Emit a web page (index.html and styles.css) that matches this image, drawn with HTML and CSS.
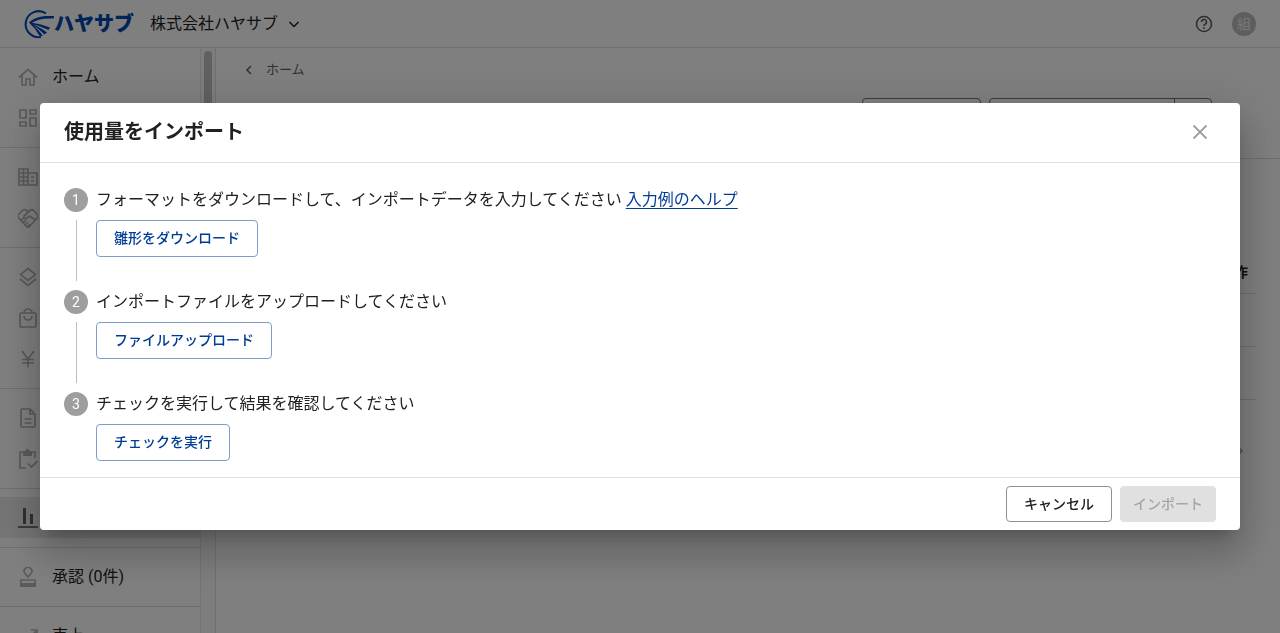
FILE: index.html
```html
<!doctype html>
<html lang="ja">
<head>
    <meta charset="UTF-8">
    <title>使用量をインポート</title>
    <link rel="stylesheet" href="styles.css">
</head>
<body>
<header class="header">
    <a href="#" class="logo">
        <svg class="logo-mark" viewBox="0 0 30 28">
            <path class="ring" d="M22 3.500A13 13 0 1 0 17 27"/>
            <path d="M5 12.500C11 6.500 19 5.500 30.500 6L29.500 8.500C20 8 13 9.500 8 12.800Q17 14 26 17.500L24.500 20Q16 15.800 9 14.300Q18 18.500 23 22.500L20.500 24.500Q15.500 19 9 15.200Q15.500 20.500 18.800 25.500L16 26.500Q12 19 5 12.500Z"/>
        </svg>
        <span>ハヤサブ</span>
    </a>
    <button type="button" class="company">株式会社ハヤサブ
        <svg class="icon-16" viewBox="0 0 16 16"><path d="M3.500 6L8 10.500L12.500 6"/></svg>
    </button>
    <a href="#" class="help" aria-label="ヘルプ">
        <svg class="icon-20" viewBox="0 0 20 20"><circle cx="10" cy="10" r="7.500"/><path d="M7.500 8a2.500 2.500 0 1 1 3.600 2.200c-.8.500-1.100.9-1.100 1.800M10 13.200v1.700"/></svg>
    </a>
    <span class="avatar">組</span>
</header>

<div class="page">
    <nav class="sidebar">
        <div class="menu">
            <div class="menu-group">
                <a href="#" class="menu-item">
                    <svg class="icon-20" viewBox="0 0 20 20"><path d="M1 10.500L10 2.500L19 10.500M4 8.500V18H8V12H12V18H16V8.500"/></svg>
                    ホーム
                </a>
                <a href="#" class="menu-item" aria-label="ダッシュボード">
                    <svg class="icon-20" viewBox="0 0 20 20"><path d="M2 2h6v8H2zM12 2h6v4h-6zM2 14h6v4H2zM12 10h6v8h-6z"/></svg>
                </a>
            </div>
            <div class="menu-group">
                <a href="#" class="menu-item" aria-label="会社">
                    <svg class="icon-20" viewBox="0 0 20 20"><path d="M1 2h9v16H1zM10 6h9v12h-9M1 6h9M1 10h9M1 14h9M5.500 2v16M13 10h3M13 14h3"/></svg>
                </a>
                <a href="#" class="menu-item" aria-label="取引先">
                    <svg class="icon-20" viewBox="0 0 20 20"><path d="M10 3.500L8 2Q6 1 4.500 2.500L1 6Q-1 8 .8 10L8.500 18.500Q10 19.800 11.500 18.500L19.200 10Q21 8 19 6L15.500 2.500Q14 1 12 2.500L6 8Q5.500 11 8.500 10.500L11.500 8L17.500 12M3 12.500L5.500 10M5 14.800L7.800 12M7 17L10 14M9.500 18.800L12 16"/></svg>
                </a>
            </div>
            <div class="menu-group">
                <a href="#" class="menu-item" aria-label="商品">
                    <svg class="icon-20" viewBox="0 0 20 20"><path d="M10 1.500L17.500 7.500L10 13.500L2.500 7.500ZM2 12L10 18.500L18 12"/></svg>
                </a>
                <a href="#" class="menu-item" aria-label="注文">
                    <svg class="icon-20" viewBox="0 0 20 20"><rect x="2" y="5" width="16" height="14" rx="1"/><path d="M6 5a4 4 0 0 1 8 0M6 8a4 4 0 0 0 8 0"/></svg>
                </a>
                <a href="#" class="menu-item" aria-label="請求">
                    <svg class="icon-20" viewBox="0 0 20 20"><path d="M4 2L10 10L16 2M4 10.500h12M4 14h12M10 10v8.500"/></svg>
                </a>
            </div>
            <div class="menu-group">
                <a href="#" class="menu-item" aria-label="書類">
                    <svg class="icon-20" viewBox="0 0 20 20"><path d="M4 1h8l5 5v12q0 1-1 1H4q-1 0-1-1V2q0-1 1-1zM12 1v5h5M6.500 11h7M6.500 15h7"/></svg>
                </a>
                <a href="#" class="menu-item" aria-label="確認">
                    <svg class="icon-20" viewBox="0 0 20 20"><path d="M8 19H2V3h15v6M10 14.500l3.500 3.500l6-6"/><path class="filled" d="M5 2h2.500a2 2 0 0 1 4 0H14v5H5z"/></svg>
                </a>
            </div>
            <div class="menu-group">
                <a href="#" class="menu-item selected" aria-label="使用量">
                    <svg class="icon-20" viewBox="0 0 20 20"><path class="bars" d="M6.500 0v16M13.500 6v10"/><path d="M0 19h20"/></svg>
                </a>
            </div>
            <div class="menu-group">
                <a href="#" class="menu-item">
                    <svg class="icon-20" viewBox="0 0 20 20"><path d="M10 10L7 6.500a3.800 3.800 0 1 1 6 0ZM3 13h14v5H3z"/><path class="filled" d="M2 16h16v4H2z"/></svg>
                    承認 (0件)
                </a>
            </div>
            <div class="menu-group">
                <a href="#" class="menu-item">
                    <svg class="icon-20" viewBox="0 0 20 20"><path d="M1 15L7 9L11 13L18 5M13 4h6v6"/></svg>
                    売上
                </a>
            </div>
        </div>
        <div class="scrollbar"><div class="thumb"></div></div>
    </nav>

    <main class="main">
        <div class="main-head">
            <a href="#" class="breadcrumb">
                <svg class="icon-16" viewBox="0 0 16 16"><path d="M10 4L6 8L10 12"/></svg>
                ホーム
            </a>
            <div class="toolbar">
                <button type="button" class="tool" aria-label="出力"></button>
                <div class="split">
                    <button type="button" class="split-main" aria-label="登録"></button>
                    <button type="button" class="split-more" aria-label="その他"></button>
                </div>
            </div>
        </div>
        <div class="list">
            <table class="list-table">
                <thead><tr><th>操作</th></tr></thead>
                <tbody>
                <tr><td></td></tr>
                <tr><td></td></tr>
                </tbody>
            </table>
            <button type="button" class="next" aria-label="次へ">
                <svg class="icon-16" viewBox="0 0 16 16"><path d="M6 4L10 8L6 12"/></svg>
            </button>
        </div>
    </main>
</div>

<div class="backdrop">
    <div class="dialog" role="dialog" aria-labelledby="dialog-title">
        <div class="dialog-head">
            <h2 id="dialog-title">使用量をインポート</h2>
            <button type="button" class="close" aria-label="閉じる">
                <svg class="icon-16" viewBox="0 0 16 16"><path d="M1.500 1.500L14.500 14.500M14.500 1.500L1.500 14.500"/></svg>
            </button>
        </div>
        <ol class="steps">
            <li class="step">
                <span class="number">1</span>
                <div class="step-body">
                    <p>フォーマットをダウンロードして、インポートデータを入力してください <a href="#">入力例のヘルプ</a></p>
                    <button type="button" class="btn">雛形をダウンロード</button>
                </div>
            </li>
            <li class="step">
                <span class="number">2</span>
                <div class="step-body">
                    <p>インポートファイルをアップロードしてください</p>
                    <button type="button" class="btn">ファイルアップロード</button>
                </div>
            </li>
            <li class="step">
                <span class="number">3</span>
                <div class="step-body">
                    <p>チェックを実行して結果を確認してください</p>
                    <button type="button" class="btn">チェックを実行</button>
                </div>
            </li>
        </ol>
        <div class="dialog-foot">
            <button type="button" class="btn btn-cancel">キャンセル</button>
            <button type="button" class="btn btn-import" disabled>インポート</button>
        </div>
    </div>
</div>
</body>
</html>
```

FILE: styles.css
```css
* {
    margin: 0;
    padding: 0;
    box-sizing: border-box;
}

body {
    height: 100vh;
    display: flex;
    flex-direction: column;
    overflow: hidden;
    background-color: #fff;
    color: #212121;
    font-family: Roboto, "Noto Sans CJK JP", sans-serif;
    font-size: 16px;
    line-height: 24px;
}

a {
    color: inherit;
    text-decoration: none;
}

button {
    font: inherit;
    color: inherit;
    background: none;
    border: 0;
    cursor: pointer;
}

svg {
    flex-shrink: 0;
    fill: none;
    stroke: currentColor;
    stroke-width: 2;
}

.icon-16 {
    width: 16px;
    height: 16px;
    stroke-width: 1.5;
}

.icon-20 {
    width: 20px;
    height: 20px;
}

.filled {
    fill: currentColor;
    stroke: none;
}

/* ヘッダー */
.header {
    height: 48px;
    flex-shrink: 0;
    display: flex;
    align-items: center;
    padding: 0 24px;
    border-bottom: 1px solid #e0e0e0;
}

.logo {
    display: flex;
    align-items: center;
    color: #0046b0;
    font-size: 20px;
    font-weight: 900;
}

.logo-mark {
    width: 30px;
    height: 28px;
    fill: currentColor;
    stroke: none;
}

.ring {
    fill: none;
    stroke: currentColor;
    stroke-width: 2;
}

.company {
    display: flex;
    align-items: center;
    gap: 8px;
    margin-left: 16px;
}

.help {
    display: flex;
    margin-left: auto;
    color: #616161;
}

.help svg {
    stroke-width: 1.6;
}

.avatar {
    width: 24px;
    height: 24px;
    margin-left: 18px;
    border-radius: 50%;
    background-color: #bdbdbd;
    color: #eee;
    font-size: 14px;
    text-align: center;
}

.page {
    flex: 1;
    min-height: 0;
    display: flex;
}

/* サイドメニュー */
.sidebar {
    width: 216px;
    flex-shrink: 0;
    display: flex;
    border-right: 1px solid #e0e0e0;
}

.menu {
    flex: 1;
    overflow: hidden;
    border-right: 1px solid #e8e8e8;
}

.menu-group {
    padding: 8px 0 9px;
    border-bottom: 1px solid #dcdcdc;
}

.menu-item {
    height: 41px;
    display: flex;
    align-items: center;
    gap: 14px;
    padding: 0 18px;
}

.menu-item svg {
    color: #b4b4b4;
    stroke-width: 1.7;
}

.selected {
    background-color: #ebebeb;
}

.selected svg {
    color: #616161;
}

.bars {
    stroke-width: 3;
}

.scrollbar {
    width: 14px;
    padding: 3px;
    background-color: #fafafa;
}

.thumb {
    height: 240px;
    border-radius: 4px;
    background-color: #c1c1c1;
}

/* 一覧 */
.main {
    flex: 1;
    min-width: 0;
}

.main-head {
    height: 111px;
    padding: 10px 68px 0 25px;
    border-bottom: 1px solid #dcdcdc;
}

.breadcrumb {
    display: flex;
    align-items: center;
    gap: 9px;
    font-size: 13px;
    color: #616161;
}

.toolbar {
    display: flex;
    justify-content: flex-end;
    gap: 8px;
    margin-top: 16px;
}

.tool,
.split {
    height: 36px;
    border: 1px solid #757575;
    border-radius: 4px;
}

.tool {
    width: 119px;
}

.split {
    width: 223px;
    display: flex;
}

.split-main {
    flex: 1;
    border-right: 1px solid #757575;
}

.split-more {
    width: 36px;
}

.list {
    padding: 92px 24px 0;
    display: flex;
    flex-direction: column;
}

.list-table {
    border-collapse: collapse;
}

.list-table th {
    height: 42px;
    padding-right: 8px;
    border-bottom: 1px solid #dcdcdc;
    font-size: 14px;
    font-weight: 700;
    text-align: right;
}

.list-table td {
    height: 53px;
    border-bottom: 1px solid #dcdcdc;
}

.next {
    display: flex;
    align-self: flex-end;
    margin: 43px 8px 0 0;
    color: #9e9e9e;
}

/* ダイアログ */
.backdrop {
    position: fixed;
    inset: 0;
    display: flex;
    align-items: center;
    padding: 40px;
    background-color: rgba(0, 0, 0, .5);
}

.dialog {
    flex: 1;
    border-radius: 4px;
    background-color: #fff;
    box-shadow: 0 11px 15px -7px rgba(0, 0, 0, .2),
        0 24px 38px 3px rgba(0, 0, 0, .14),
        0 9px 46px 8px rgba(0, 0, 0, .12);
}

.dialog-head {
    height: 60px;
    display: flex;
    align-items: center;
    justify-content: space-between;
    padding: 0 24px 2px;
    border-bottom: 1px solid #e0e0e0;
}

.dialog-head h2 {
    font-size: 20px;
    font-weight: 700;
}

.close {
    display: flex;
    padding: 8px;
    border-radius: 50%;
    color: #9e9e9e;
}

.close svg {
    stroke-width: 1.8;
}

.steps {
    padding: 25px 24px 16px;
    list-style: none;
}

.step {
    display: grid;
    grid-template-columns: 24px 1fr;
    grid-template-rows: 24px auto;
    column-gap: 8px;
    padding-bottom: 9px;
}

.step:last-child {
    padding-bottom: 0;
}

.number {
    width: 24px;
    height: 24px;
    border-radius: 50%;
    background-color: #9e9e9e;
    color: #fff;
    font-size: 14px;
    text-align: center;
}

.step-body {
    grid-column: 2;
    grid-row: 1 / 3;
    padding-bottom: 24px;
}

.step:last-child .step-body {
    padding-bottom: 0;
}

/* 次の手順への線 */
.step:not(:last-child)::after {
    content: "";
    grid-row: 2;
    width: 1px;
    margin: 8px 0 0 12px;
    background-color: #bdbdbd;
}

.step a {
    color: #003c96;
    text-decoration: underline;
    text-decoration-thickness: 1px;
    text-underline-offset: 3px;
}

.btn {
    height: 37px;
    padding: 0 17px 2px;
    border: 1px solid #7f9dca;
    border-radius: 4px;
    color: #003c96;
    font-size: 14px;
    font-weight: 500;
}

.step .btn {
    display: block;
    margin-top: 8px;
}

.dialog-foot {
    display: flex;
    justify-content: flex-end;
    gap: 8px;
    padding: 8px 24px;
    border-top: 1px solid #e0e0e0;
}

.dialog-foot .btn {
    height: 36px;
    padding-bottom: 0;
}

.btn-cancel {
    border-color: #909090;
    color: #212121;
}

.dialog-foot .btn-import {
    padding: 0 12px;
    border-color: #e0e0e0;
    background-color: #e0e0e0;
    color: #a6a6a6;
}
```
